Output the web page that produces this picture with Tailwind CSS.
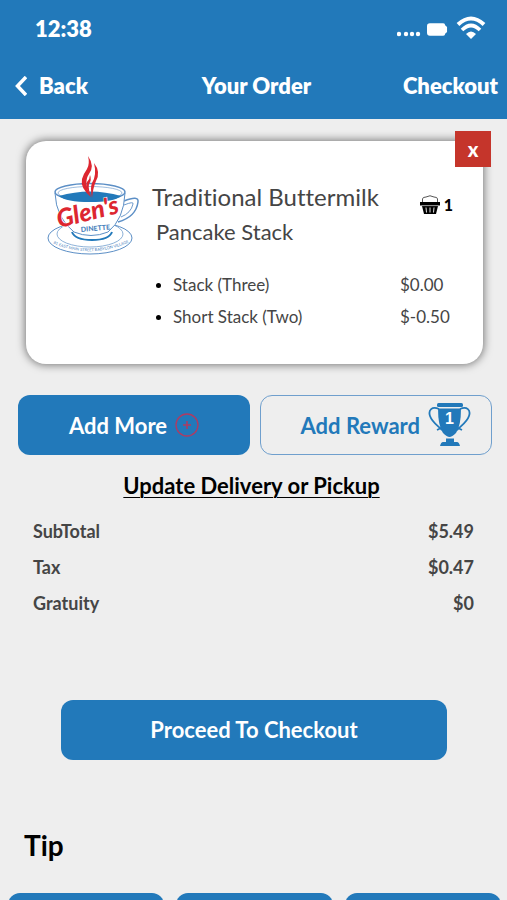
<!DOCTYPE html>
<html lang="en">

<head>
    <meta charset="UTF-8">
    <meta name="viewport" content="width=device-width, initial-scale=1.0">
    <title>Your Order</title>
    <script src="https://cdn.jsdelivr.net/npm/@tailwindcss/browser@4"></script>
</head>

<body class="bg-[#eeeeee] font-['Lato',sans-serif] text-[#454545] [font-variant-ligatures:none]">
    <!-- Header -->
    <header class="bg-[#2279ba] text-white font-extrabold">
        <div class="flex items-center justify-between h-14 pl-[35px] pr-[21px]">
            <span class="text-[22px]">12:38</span>
            <div class="flex items-center">
                <svg class="w-6 h-3 mt-3" viewBox="0 0 24 12" fill="currentColor">
                    <circle cx="2" cy="6" r="2.200" />
                    <circle cx="9" cy="6" r="2.200" />
                    <circle cx="15" cy="6" r="2.200" />
                    <circle cx="21" cy="6" r="2.200" />
                </svg>
                <svg class="w-[21px] h-[13px] mt-0.5 ml-1.5" viewBox="0 0 22 13" fill="currentColor">
                    <path d="M3 0h14q2 0 2 2l2 2v5l-2 2q0 2-2 2H3q-3 0-3-3V3q0-3 3-3z" />
                </svg>
                <svg class="w-[30px] h-6 ml-2" viewBox="0 0 30 24" fill="none" stroke="currentColor" stroke-width="4">
                    <path d="M2 8.500Q15-3.500 28 8.500" />
                    <path d="M6 14Q15 5 24 14" stroke-width="3.600" />
                    <path d="M10 18Q15 13 20 18L15 23Z" fill="currentColor" stroke="none" />
                </svg>
            </div>
        </div>
        <nav class="grid grid-cols-3 items-center h-[63px] pb-1 pl-[15px] pr-[9px] text-[22px]">
            <a href="#" class="flex items-center gap-3">
                <svg class="w-3 h-5" viewBox="0 0 12 20" fill="none" stroke="currentColor" stroke-width="3.500">
                    <path d="M11 1L2.500 10L11 19" />
                </svg>
                Back
            </a>
            <h1 class="text-center whitespace-nowrap">Your Order</h1>
            <a href="#" class="text-right">Checkout</a>
        </nav>
    </header>

    <main>
        <!-- Order item -->
        <section class="relative flex ml-[26px] mr-6 mt-[22px] pt-3.5 pl-5 h-[223px] bg-white rounded-[20px] shadow-[0_0_8px_1px_rgba(0,0,0,0.5)]">
            <button class="absolute -top-2.5 -right-2 w-9 h-9 bg-[#c5352b] text-white text-xl font-black" aria-label="Remove item">x</button>
            <svg class="w-24 h-[100px] shrink-0 overflow-visible" viewBox="0 0 96 100" fill="none" stroke="#5c8fc6">
                <ellipse cx="44" cy="83" rx="42" ry="16" fill="white" />
                <ellipse cx="44" cy="79" rx="33" ry="13" stroke-width="0.700" />
                <path d="M78 46q15-6 14 1q-2 15-20 20" stroke-width="1.500" />
                <path d="M78 50q10-4 9-1q-2 9-12 13" stroke-width="0.900" />
                <path d="M26 77q3 8 20 8q17 0 20-8" fill="white" stroke="#2279ba" stroke-width="2" />
                <path d="M9 38Q10 63 28 77Q45 84 62 77Q78 64 79 38" fill="white" />
                <ellipse cx="44" cy="37" rx="35" ry="8.500" fill="white" stroke-width="1.500" />
                <ellipse cx="44" cy="38" rx="32" ry="6.500" stroke-width="0.600" />
                <path d="M13 41Q44 32 75 41Q68 47 44 47Q20 47 13 41Z" fill="#2279ba" stroke="none" />
                <g fill="#dd2630" stroke="none">
                    <path d="M42 1Q49 11 43 19Q37 27 45 42Q34 33 36 24Q38 18 41 14Q44 9 42 1Z" />
                    <path d="M48 8Q55 17 50 26Q47 33 46 43Q44 33 46 28Q51 20 48 8Z" />
                    <path d="M44 20Q46 25 43 29Q42 34 45 41Q39 33 41 27Q44 24 44 20Z" />
                </g>
                <text x="35" y="77" font-size="7" font-weight="900" fill="#4c83bd" stroke="none" transform="rotate(-5 35 77)">DINETTE</text>
                <text x="13" y="73" font-family="Lato" font-size="25" font-weight="900" font-style="italic" fill="#dd2630" stroke="white" stroke-width="1" paint-order="stroke" transform="rotate(-14 13 73)">Glen's</text>
                <path id="rim" d="M6 88Q44 105 84 87" stroke="none" />
                <text font-size="4" fill="#4c83bd" stroke="none">
                    <textPath href="#rim" startOffset="50%" text-anchor="middle">81 EAST MAIN STREET BABYLON VILLAGE</textPath>
                </text>
            </svg>
            <div class="flex-1 pl-2.5 pt-6">
                <div class="flex justify-between pr-[30px]">
                    <h2 class="whitespace-nowrap">
                        <span class="block text-2xl leading-9">Traditional Buttermilk</span>
                        <span class="block pl-1 text-[22px] leading-[34px]">Pancake Stack</span>
                    </h2>
                    <div class="flex items-center h-9 pt-4 gap-1 text-base font-black text-black">
                        <svg class="w-5 h-5" viewBox="0 0 20 20" fill="currentColor">
                            <path d="M2.500 8V4Q2.500 2 6 2Q10-.5 14 2Q17.500 2 17.500 4V8" fill="none" stroke="#555555" />
                            <path d="M0 7h20v3.500H0zM2 11h16l-2 8H4z" />
                            <path d="M6 12.500l.5 5M10 12.500v5M14 12.500l-.5 5" stroke="white" stroke-width="0.900" />
                            <path d="M1 10.700h18" stroke="#999999" stroke-width="0.700" />
                        </svg>
                        1
                    </div>
                </div>
                <ul class="mt-5 pl-1 pr-[25px] text-[17px] leading-8">
                    <li class="flex items-center">
                        <span class="w-[5px] h-[5px] mr-3 rounded-full bg-black"></span>
                        <span class="flex-1">Stack (Three)</span>
                        <span class="w-[58px]">$0.00</span>
                    </li>
                    <li class="flex items-center">
                        <span class="w-[5px] h-[5px] mr-3 rounded-full bg-black"></span>
                        <span class="flex-1">Short Stack (Two)</span>
                        <span class="w-[58px]">$-0.50</span>
                    </li>
                </ul>
            </div>
        </section>

        <!-- Actions -->
        <div class="grid grid-cols-2 gap-2.5 mt-[31px] pl-[18px] pr-[15px] text-[22px] font-bold">
            <button class="flex items-center justify-center gap-2 h-[60px] rounded-xl bg-[#2279ba] text-white">
                Add More
                <svg class="w-6 h-6" viewBox="0 0 24 24" fill="none" stroke="#b03b62">
                    <circle cx="12" cy="12" r="11" stroke-width="1.300" />
                    <path d="M12 8v8M8 12h8" stroke-width="1.500" />
                </svg>
            </button>
            <button class="flex items-center justify-end gap-2 h-[60px] pr-5 rounded-xl border border-[#6f9fcd] text-[#2279ba] whitespace-nowrap">
                Add Reward
                <svg class="w-[43px] h-11" viewBox="0 0 43 44" fill="currentColor">
                    <path d="M11 6C4 3 0 7 2 13C4 19 9 22 14 27M32 6C39 3 43 7 41 13C39 19 34 22 29 27M9 27l6-3M34 27l-6-3" fill="none" stroke="currentColor" stroke-width="1.800" />
                    <rect x="9" y="0" width="26" height="4" rx="1.500" />
                    <path d="M10 5.500H33Q33 23 28 30Q24 34 21.500 34Q19 34 15 30Q10 23 10 5.500Z" />
                    <path d="M18 35.500h8v3.500h3q2 0 3 4H12q1-4 3-4h3z" />
                    <text x="17" y="21" font-family="Liberation Sans" font-size="16" font-weight="700" fill="white">1</text>
                </svg>
            </button>
        </div>

        <div class="mt-[15px] pr-1 text-center">
            <a href="#" class="text-[22px] leading-8 font-bold text-black underline decoration-1 underline-offset-3">Update Delivery or Pickup</a>
        </div>

        <!-- Totals -->
        <dl class="mt-[11px] px-[33px] text-lg leading-9 font-bold">
            <div class="flex justify-between">
                <dt>SubTotal</dt>
                <dd>$5.49</dd>
            </div>
            <div class="flex justify-between">
                <dt>Tax</dt>
                <dd>$0.47</dd>
            </div>
            <div class="flex justify-between">
                <dt>Gratuity</dt>
                <dd>$0</dd>
            </div>
        </dl>

        <div class="mt-[79px] pl-[61px] pr-[60px]">
            <button class="w-full h-[60px] pb-0.5 rounded-xl bg-[#2279ba] text-white text-[22px] font-bold">Proceed To Checkout</button>
        </div>

        <!-- Tip -->
        <section class="mt-[65px]">
            <h2 class="pl-6 text-[28px] leading-10 font-bold text-black">Tip</h2>
            <div class="grid grid-cols-3 gap-3 mt-7 pl-2 pr-1.5">
                <button class="h-[60px] rounded-xl bg-[#2279ba]" aria-label="Tip option 1"></button>
                <button class="h-[60px] rounded-xl bg-[#2279ba]" aria-label="Tip option 2"></button>
                <button class="h-[60px] rounded-xl bg-[#2279ba]" aria-label="Tip option 3"></button>
            </div>
        </section>
    </main>
</body>

</html>
